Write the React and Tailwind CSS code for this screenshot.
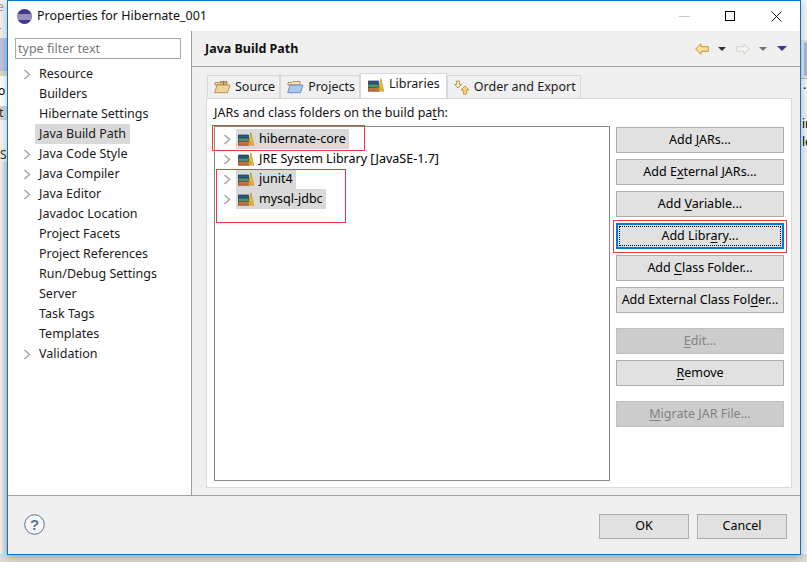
import React from "react";

const F = { fontFamily: '"Noto Sans","Open Sans",sans-serif' };

function U({ children }) {
  return <span className="underline underline-offset-2">{children}</span>;
}

function Chevron({ className = "" }) {
  return (
    <svg width="8" height="11" viewBox="0 0 8 11" className={className}>
      <path d="M1.5 1 L6.5 5.5 L1.5 10" fill="none" stroke="#a8a8a8" strokeWidth="1.6" />
    </svg>
  );
}

function LibIcon() {
  return (
    <svg width="16" height="14" viewBox="0 0 16 14" className="shrink-0">
      <rect x="0.5" y="3" width="10" height="3" fill="#35557f" stroke="#1f3557" strokeWidth="0.7" />
      <rect x="0.5" y="6.3" width="10.5" height="3" fill="#3e9a78" stroke="#24604a" strokeWidth="0.7" />
      <rect x="0.5" y="9.6" width="11" height="3.6" fill="#c4713c" stroke="#7c4020" strokeWidth="0.7" />
      <path d="M10.5 13.2 L12.8 0.8 L15.7 13.2 L13.6 13.2 L12.8 9.5 L12.2 13.2 Z" fill="#f3c33e" stroke="#b98a1c" strokeWidth="0.7" />
    </svg>
  );
}

function FolderIcon({ blue }) {
  return (
    <svg width="17" height="14" viewBox="0 0 17 14" className="shrink-0">
      <path d="M1 4 V2.5 H5 L6 1.5 H13 V5 H1 Z" fill={blue ? "#f4e2b0" : "#e8cf9c"} stroke="#a5824a" strokeWidth="0.8" />
      <path d="M0.7 12.7 L3 5 H16 L13.5 12.7 Z" fill={blue ? "#a9c8ec" : "#f1d597"} stroke={blue ? "#5a80b0" : "#a5824a"} strokeWidth="0.8" />
      {!blue && <path d="M9.5 0.8 V5 M6 2.8 H13" stroke="#8a6a38" strokeWidth="0.8" />}
    </svg>
  );
}

function OrderIcon() {
  return (
    <svg width="16" height="15" viewBox="0 0 16 15" className="shrink-0">
      <path d="M4 8 L7.5 4.5 L5.5 4.5 L5.5 1 L2.5 1 L2.5 4.5 L0.6 4.5 Z" fill="#fbeebc" stroke="#a98a3c" strokeWidth="0.8" />
      <path d="M11 6 L15 10 L12.7 10 L12.7 14 L9.3 14 L9.3 10 L7 10 Z" fill="#f6d67a" stroke="#b8862b" strokeWidth="0.8" />
    </svg>
  );
}

function Btn({ children, disabled, focused }) {
  if (focused) {
    return (
      <div className="h-[26px] w-full border-[2px] border-[#0078d7] bg-[#e1e1e1] p-px">
        <div className="h-full border border-dotted border-black flex items-center justify-center text-[12.5px] text-black">
          <span>{children}</span>
        </div>
      </div>
    );
  }
  return (
    <div className={"h-[26px] w-full flex items-center justify-center text-[12.5px] border " + (disabled ? "bg-[#cccccc] border-[#bfbfbf] text-[#838383]" : "bg-[#e1e1e1] border-[#adadad] text-black")}>
      <span>{children}</span>
    </div>
  );
}

function Tab({ icon, label, active }) {
  return (
    <div className={active
      ? "h-[25px] -mb-px bg-white border border-b-0 border-[#d9d9d9] flex items-center gap-[5px] pl-[7px] pr-[6px] pb-[3px] z-10"
      : "h-[23px] mt-[2px] bg-[#f0f0f0] border border-b-0 border-[#d9d9d9] flex items-center gap-[4px] pl-[6px] pr-[4px]"}>
      {icon}
      <span className="text-[12.5px] text-[#1a1a1a]">{label}</span>
    </div>
  );
}

function Row({ label, sel }) {
  return (
    <div className="h-5 flex items-center pl-[8px]">
      <div className="w-[14px] flex"><Chevron /></div>
      <div className={"h-5 flex items-center gap-[4px] pl-[2px] pr-[3px] ml-[-1px] " + (sel ? "bg-[#d9d9d9]" : "")}>
        <LibIcon />
        <span className="text-[12.5px] text-black whitespace-nowrap ml-[1px]">{label}</span>
      </div>
    </div>
  );
}

function NavItem({ label, chev, sel }) {
  return (
    <div className="h-5 flex items-center pl-[21px]">
      <div className="w-[14px] flex">{chev && <Chevron className="ml-[1px]" />}</div>
      <span className={"h-5 flex items-center text-[12.5px] text-[#1a1a1a] whitespace-nowrap px-[4px] ml-[-1px] " + (sel ? "bg-[#d9d9d9]" : "")}>{label}</span>
    </div>
  );
}

const nav = [
  ["Resource", true], ["Builders"], ["Hibernate Settings"], ["Java Build Path", false, true],
  ["Java Code Style", true], ["Java Compiler", true], ["Java Editor", true], ["Javadoc Location"],
  ["Project Facets"], ["Project References"], ["Run/Debug Settings"], ["Server"],
  ["Task Tags"], ["Templates"], ["Validation", true],
];

export default function App() {
  return (
    <div style={F} className="relative w-[807px] h-[562px] overflow-hidden bg-[#dedcd2] flex">
      {/* window behind, left */}
      <div className="w-[7px] shrink-0 h-[554px] bg-[#e6e6e6] flex flex-col overflow-hidden text-[12px] leading-none text-[#333]">
        <div className="h-[38px] bg-[#f0f0f0] pt-[1px] flex flex-col">
          <span className="h-[24px] text-[#999] -ml-[3px]">e</span>
          <span className="-ml-[4px] text-[#666]">r</span>
        </div>
        <div className="h-[33px] bg-[#b9c5dc]" />
        <div className="h-[5px] bg-[#dcd8c8]" />
        <div className="h-[30px] bg-white flex items-center text-black"><span className="-ml-[2px]">o</span></div>
        <div className="h-[14px] bg-[#d4d4d4] flex items-center"><span className="-ml-[1px]">t</span></div>
        <div className="h-[28px] bg-[#f5f5f5]" />
        <div className="h-[14px] bg-[#eeeeee] flex items-center"><span>S</span></div>
        <div className="flex-1 bg-gradient-to-r from-[#f2f2f2] to-[#d2d2d2]" />
      </div>
      <div className="w-[794px] shrink-0 h-[555px] bg-white border border-[#0078d7] flex flex-col shadow-[0_3px_8px_rgba(0,0,0,0.25)] z-10">
        {/* title */}
        <div className="h-[30px] shrink-0 flex items-center pl-[9px] bg-white">
          <svg width="15" height="15" viewBox="0 0 15 15">
            <circle cx="7.5" cy="7.5" r="7.5" fill="#473788" />
            <path d="M0.3 6 H14.7 M0.1 8 H14.9 M0.8 10 H14.2" stroke="#fff" strokeWidth="0.9" />
          </svg>
          <span className="ml-[5px] text-[12.5px] text-[#111]">Properties for Hibernate_001</span>
          <div className="ml-auto flex items-center h-full">
            <div className="w-[11px] h-px bg-[#c8c8c8] mr-[35px]" />
            <div className="w-[10px] h-[10px] border border-black mr-[36px]" />
            <svg width="11" height="11" viewBox="0 0 11 11" className="mr-[18px]"><path d="M0.5 0.5 L10.5 10.5 M10.5 0.5 L0.5 10.5" stroke="#111" strokeWidth="1" /></svg>
          </div>
        </div>
        <div className="flex-1 flex min-h-0 border-b border-[#a0a0a0]">
          {/* sidebar */}
          <div className="w-[184px] shrink-0 bg-white border-r border-[#a0a0a0] flex flex-col pt-[7px]">
            <div className="ml-[7px] w-[166px] h-[21px] border border-[#a9a9a9] flex items-center pl-[2px] pt-[2px] text-[12.5px] text-[#7a7a7a]">type filter text</div>
            <div className="mt-[5px] flex flex-col -ml-[7px]">
              {nav.map(([l, c, s]) => <NavItem key={l} label={l} chev={c} sel={s} />)}
            </div>
          </div>
          {/* main */}
          <div className="flex-1 bg-[#f0f0f0] flex flex-col min-w-0">
            <div className="h-[36px] shrink-0 border-b border-[#a0a0a0] flex items-center pl-[13px] pr-[13px]">
              <span className="text-[12.5px] font-bold text-[#111] mt-[2px]">Java Build Path</span>
              <div className="ml-auto flex items-center">
                <svg width="14" height="12" viewBox="0 0 14 12"><path d="M0.7 6 L6 0.8 V3.7 H13.3 V8.3 H6 V11.2 Z" fill="#fbe39a" stroke="#c8922c" /></svg>
                <div className="ml-[9px] w-0 h-0 border-x-[4px] border-x-transparent border-t-[4px] border-t-[#333]" />
                <svg width="14" height="12" viewBox="0 0 14 12" className="ml-[10px]"><path d="M13.3 6 L8 0.8 V3.7 H0.7 V8.3 H8 V11.2 Z" fill="#f4f4f0" stroke="#cfd2cc" /></svg>
                <div className="ml-[9px] w-0 h-0 border-x-[4px] border-x-transparent border-t-[4px] border-t-[#777]" />
                <div className="ml-[10px] w-0 h-0 border-x-[5px] border-x-transparent border-t-[5px] border-t-[#473788]" />
              </div>
            </div>
            <div className="flex-1 flex flex-col pl-[14px] pr-[8px] pt-[6px] pb-[7px] min-h-0">
              <div className="flex h-[25px] shrink-0 pl-[1px]">
                <Tab icon={<FolderIcon />} label="Source" />
                <Tab icon={<FolderIcon blue />} label="Projects" />
                <Tab icon={<LibIcon />} label="Libraries" active />
                <Tab icon={<OrderIcon />} label="Order and Export" />
              </div>
              <div className="flex-1 bg-white border border-[#d9d9d9] flex flex-col pl-[7px] pr-[7px] pt-[6px] min-h-0">
                <div className="h-[16px] flex items-center text-[12.5px] text-[#111]"><span>JARs and class folders on the build pa<U>t</U>h:</span></div>
                <div className="flex-1 flex gap-[6px] mt-[5px] min-h-0">
                  <div className="w-[396px] shrink-0 h-[355px] border border-[#8a8a8a] bg-white pt-[2px]">
                    <Row label="hibernate-core" sel />
                    <Row label="JRE System Library [JavaSE-1.7]" />
                    <Row label="junit4" sel />
                    <Row label="mysql-jdbc" sel />
                  </div>
                  <div className="w-[168px] shrink-0 flex flex-col pt-px">
                    <div className="flex flex-col gap-[6px]">
                      <Btn>Add <U>J</U>ARs...</Btn>
                      <Btn>Add E<U>x</U>ternal JARs...</Btn>
                      <Btn>Add <U>V</U>ariable...</Btn>
                      <Btn focused>Add Libr<U>a</U>ry...</Btn>
                      <Btn>Add <U>C</U>lass Folder...</Btn>
                      <Btn>Add External Class Fol<U>d</U>er...</Btn>
                    </div>
                    <div className="mt-[15px] flex flex-col gap-[6px]">
                      <Btn disabled><U>E</U>dit...</Btn>
                      <Btn><U>R</U>emove</Btn>
                    </div>
                    <div className="mt-[15px]"><Btn disabled><U>M</U>igrate JAR File...</Btn></div>
                  </div>
                </div>
              </div>
            </div>
          </div>
        </div>
        {/* footer */}
        <div className="h-[58px] shrink-0 bg-[#f0f0f0] flex items-center pl-[16px] pr-[13px]">
          <svg width="21" height="21" viewBox="0 0 21 21" className="-mt-[2px]">
            <circle cx="10.5" cy="10.5" r="9.8" fill="#f7f7f7" stroke="#5c6f92" strokeWidth="1" />
            <text x="10.5" y="16" textAnchor="middle" fontSize="15" fontWeight="700" fill="#5c6f92" fontFamily="Liberation Sans">?</text>
          </svg>
          <div className="ml-auto flex gap-[8px] w-[188px] mt-[2px]">
            <div className="w-[90px] h-[25px] border border-[#adadad] bg-[#e1e1e1] flex items-center justify-center text-[12.5px] text-black">OK</div>
            <div className="w-[90px] h-[25px] border border-[#adadad] bg-[#e1e1e1] flex items-center justify-center text-[12.5px] text-black">Cancel</div>
          </div>
        </div>
      </div>
      {/* window behind, right */}
      <div className="flex-1 h-[554px] bg-[#f0f0f0] flex flex-col overflow-hidden text-[12px] leading-none text-black">
        <div className="h-[40px] bg-[#f4f4f4]" />
        <div className="h-[38px] bg-[#e4e4e4] pl-[3px] pt-[2px]"><div className="w-[3px] h-[34px] bg-[#a8b8d4] rounded-sm" /></div>
        <div className="h-px bg-[#b0b0b0]" />
        <div className="h-[16px] bg-[#f4f4f4] pl-[2px]">.</div>
        <div className="h-[35px] flex items-end"><span className="ml-[1px]">ir</span></div>
        <div className="h-[18px] flex items-end"><span className="ml-[1px]">le</span></div>
      </div>
      {/* red annotations */}
      <div className="absolute z-20 left-[212px] top-[125px] w-[153px] h-[26px] border border-[#f03a3a]" />
      <div className="absolute z-20 left-[216px] top-[169px] w-[130px] h-[54px] border border-[#f03a3a]" />
      <div className="absolute z-20 left-[613px] top-[220px] w-[174px] h-[33px] border border-[#f03a3a]" />
    </div>
  );
}
